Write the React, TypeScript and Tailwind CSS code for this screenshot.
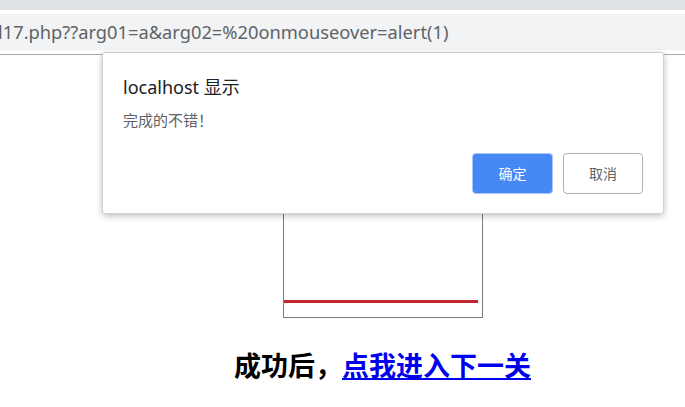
import React from "react";

export default function App() {
  return (
    <div className="relative w-[685px] h-[407px] overflow-hidden bg-white">
      {/* browser chrome */}
      <div className="h-[10px] bg-[#dee1e6]" />
      <div className="h-[4px] bg-white" />
      <div className="h-[36px] bg-[#f1f3f4] flex items-center overflow-hidden">
        <span
          className="whitespace-nowrap text-[18.3px] text-[#5f6368] ml-[-2px]"
          style={{ fontFamily: '"Noto Sans", "Liberation Sans", sans-serif' }}
        >
          l17.php??arg01=a&amp;arg02=%20onmouseover=alert(1)
        </span>
      </div>
      <div className="h-[5px] bg-white border-b border-[#a9a9a9]" />

      {/* page content */}
      <div className="flex flex-col items-center pl-[80px]">
        <div className="mt-[112px] w-[200px] h-[151px] border border-[#7a7a7a] flex flex-col justify-end pb-[14px]">
          <div className="h-[3px] w-[194px] bg-[#c4262d]" />
        </div>
        <h2
          className="mt-[29px] text-[27px] leading-[36px] font-bold text-black whitespace-nowrap"
          style={{ fontFamily: '"Noto Sans CJK SC", "Noto Sans", sans-serif' }}
        >
          成功后，<a href="#" className="text-[#0000ee] underline">点我进入下一关</a>
        </h2>
      </div>

      {/* alert dialog */}
      <div
        className="absolute left-[102px] top-[52px] w-[562px] h-[162px] bg-white border border-[#d0d0d0] rounded-[3px] shadow-[0_2px_6px_rgba(0,0,0,0.25)] flex flex-col px-[20px] pt-[22px] pb-[19px]"
        style={{ fontFamily: '"Noto Sans", "Noto Sans CJK SC", sans-serif' }}
      >
        <div className="text-[18px] leading-[24px] text-[#202124]">localhost 显示</div>
        <div
          className="mt-[12px] text-[15px] leading-[18px] text-[#5f6368]"
          style={{ fontFamily: '"Noto Sans CJK SC", sans-serif' }}
        >
          完成的不错！
        </div>
        <div className="mt-auto flex justify-end gap-[10px]">
          <button className="w-[81px] h-[41px] rounded-[4px] bg-[#4688f4] border border-[#a9c6fa] text-white text-[14px]">
            确定
          </button>
          <button className="w-[80px] h-[41px] rounded-[4px] bg-white border border-[#b0b0b0] text-[#5f6368] text-[14px]">
            取消
          </button>
        </div>
      </div>
    </div>
  );
}
